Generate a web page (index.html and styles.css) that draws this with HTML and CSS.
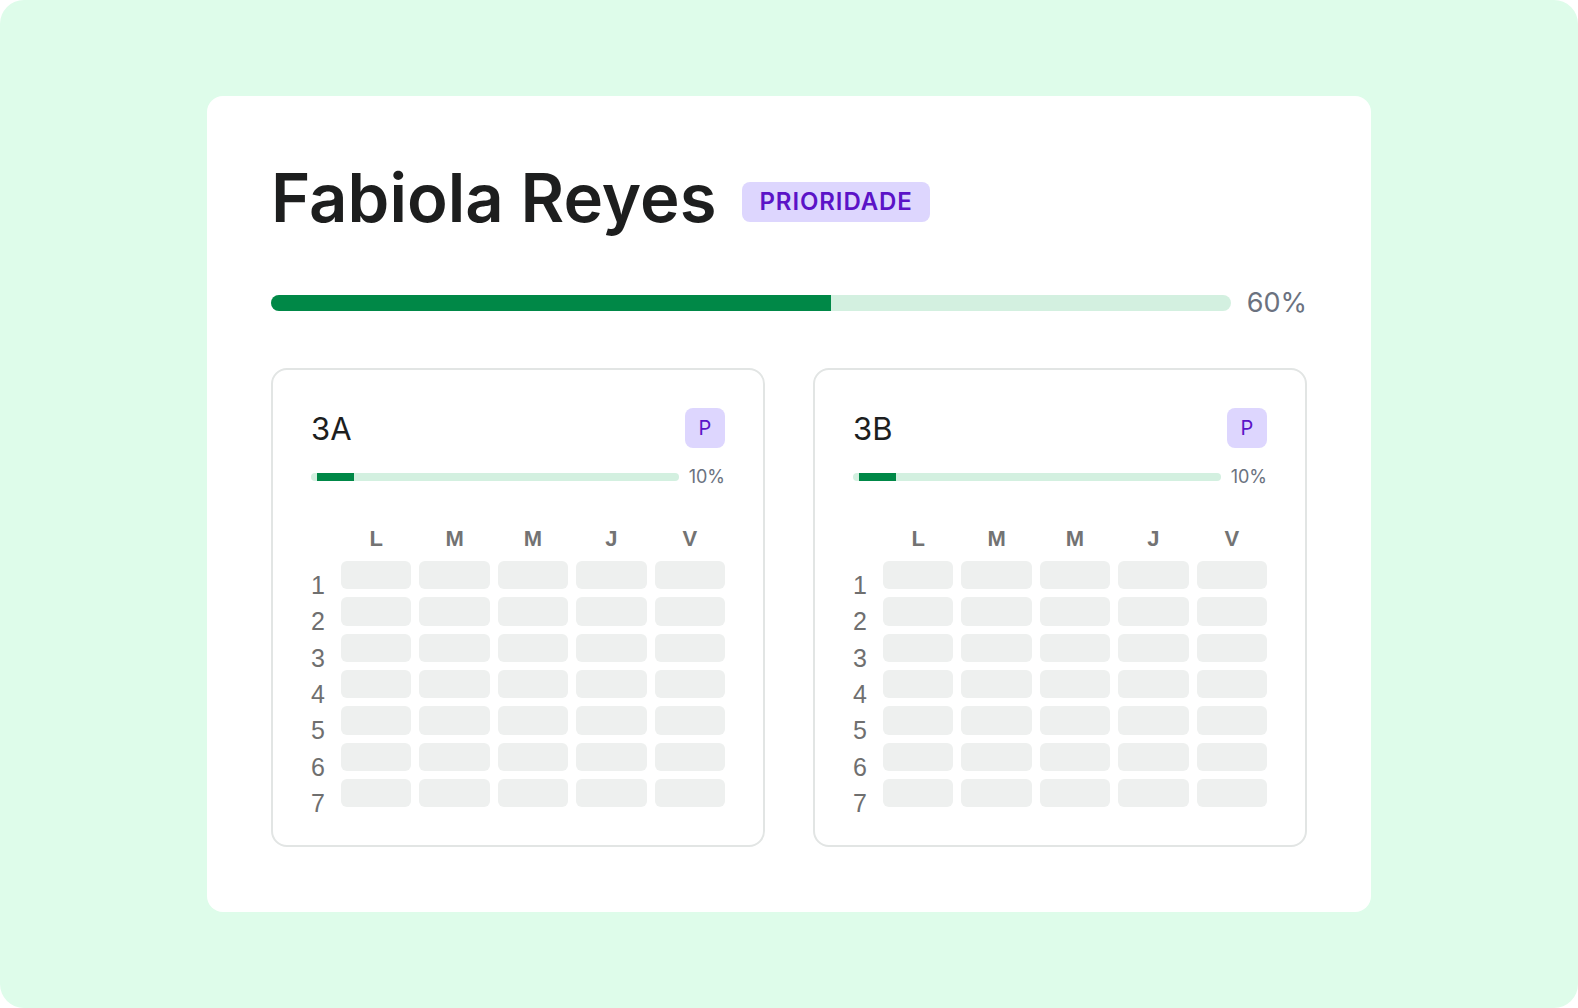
FILE: index.html
```html
<!DOCTYPE html>
<html lang="es">
<head>
    <meta charset="UTF-8">
    <meta name="viewport" content="width=device-width, initial-scale=1.0">
    <title>Fabiola Reyes</title>
    <link rel="stylesheet" href="styles.css">
</head>
<body>
    <div class="frame">
        <div class="card">
            <div class="header">
                <h1 class="name">Fabiola Reyes</h1>
                <span class="badge">PRIORIDADE</span>
            </div>

            <div class="progress">
                <div class="track"><div class="fill" style="width: 58.3%"></div></div>
                <span class="percent">60%</span>
            </div>

            <div class="groups">
                <div class="group">
                    <div class="group-head">
                        <span class="group-name">3A</span>
                        <span class="tag">P</span>
                    </div>
                    <div class="mini-progress">
                        <div class="mini-track"><div class="mini-fill" style="width: 10%"></div></div>
                        <span class="mini-percent">10%</span>
                    </div>
                    <div class="schedule">
                        <span></span>
                        <span class="day">L</span><span class="day">M</span><span class="day">M</span><span class="day">J</span><span class="day">V</span>
                        <span class="hour">1</span><span class="slot"></span><span class="slot"></span><span class="slot"></span><span class="slot"></span><span class="slot"></span>
                        <span class="hour">2</span><span class="slot"></span><span class="slot"></span><span class="slot"></span><span class="slot"></span><span class="slot"></span>
                        <span class="hour">3</span><span class="slot"></span><span class="slot"></span><span class="slot"></span><span class="slot"></span><span class="slot"></span>
                        <span class="hour">4</span><span class="slot"></span><span class="slot"></span><span class="slot"></span><span class="slot"></span><span class="slot"></span>
                        <span class="hour">5</span><span class="slot"></span><span class="slot"></span><span class="slot"></span><span class="slot"></span><span class="slot"></span>
                        <span class="hour">6</span><span class="slot"></span><span class="slot"></span><span class="slot"></span><span class="slot"></span><span class="slot"></span>
                        <span class="hour">7</span><span class="slot"></span><span class="slot"></span><span class="slot"></span><span class="slot"></span><span class="slot"></span>
                    </div>
                </div>

                <div class="group">
                    <div class="group-head">
                        <span class="group-name">3B</span>
                        <span class="tag">P</span>
                    </div>
                    <div class="mini-progress">
                        <div class="mini-track"><div class="mini-fill" style="width: 10%"></div></div>
                        <span class="mini-percent">10%</span>
                    </div>
                    <div class="schedule">
                        <span></span>
                        <span class="day">L</span><span class="day">M</span><span class="day">M</span><span class="day">J</span><span class="day">V</span>
                        <span class="hour">1</span><span class="slot"></span><span class="slot"></span><span class="slot"></span><span class="slot"></span><span class="slot"></span>
                        <span class="hour">2</span><span class="slot"></span><span class="slot"></span><span class="slot"></span><span class="slot"></span><span class="slot"></span>
                        <span class="hour">3</span><span class="slot"></span><span class="slot"></span><span class="slot"></span><span class="slot"></span><span class="slot"></span>
                        <span class="hour">4</span><span class="slot"></span><span class="slot"></span><span class="slot"></span><span class="slot"></span><span class="slot"></span>
                        <span class="hour">5</span><span class="slot"></span><span class="slot"></span><span class="slot"></span><span class="slot"></span><span class="slot"></span>
                        <span class="hour">6</span><span class="slot"></span><span class="slot"></span><span class="slot"></span><span class="slot"></span><span class="slot"></span>
                        <span class="hour">7</span><span class="slot"></span><span class="slot"></span><span class="slot"></span><span class="slot"></span><span class="slot"></span>
                    </div>
                </div>
            </div>
        </div>
    </div>
</body>
</html>
```

FILE: styles.css
```css
body {
    margin: 0;
    padding: 0;
    background-color: white;
    font-family: Inter, "Noto Sans", sans-serif;
}
.frame {
    width: 1578px;
    height: 1008px;
    box-sizing: border-box;
    background-color: #defcea;
    border-radius: 24px;
    display: flex;
    justify-content: center;
    align-items: center;
}
.card {
    width: 1164px;
    height: 816px;
    box-sizing: border-box;
    padding: 62px 64px 0;
    background-color: white;
    border-radius: 16px;
}
.header {
    display: flex;
    align-items: center;
    gap: 26px;
}
.name {
    margin: 0;
    font-size: 67px;
    line-height: 80px;
    font-weight: 600;
    color: #1d1e1e;
}
.badge {
    margin-top: 8px;
    height: 40px;
    line-height: 40px;
    padding: 0 17px;
    border-radius: 8px;
    background-color: #ddd6fe;
    color: #5b13c7;
    font-size: 24px;
    font-weight: 600;
    letter-spacing: 0.9px;
}
.progress {
    display: flex;
    align-items: center;
    gap: 16px;
    margin-top: 48px;
}
.track {
    flex: 1;
    height: 16px;
    border-radius: 8px;
    background-color: #d3f0e0;
    overflow: hidden;
}
.fill {
    height: 100%;
    background-color: #008847;
}
.percent {
    font-size: 27px;
    line-height: 34px;
    color: #6b7280;
}
.groups {
    display: grid;
    grid-template-columns: 1fr 1fr;
    gap: 48px;
    margin-top: 48px;
}
.group {
    border: 2px solid #e2e5e4;
    border-radius: 16px;
    padding: 38px;
}
.group-head {
    display: flex;
    justify-content: space-between;
    align-items: center;
}
.group-name {
    font-size: 31px;
    color: #1d1e1e;
}
.tag {
    width: 40px;
    height: 40px;
    line-height: 40px;
    text-align: center;
    border-radius: 8px;
    background-color: #ddd6fe;
    color: #5b13c7;
    font-size: 20px;
}
.mini-progress {
    display: flex;
    align-items: center;
    gap: 10px;
    margin-top: 19px;
}
.mini-track {
    flex: 1;
    height: 8px;
    border-radius: 4px;
    background-color: #d3f0e0;
}
.mini-fill {
    height: 100%;
    margin-left: 6px;
    background-color: #008847;
}
.mini-percent {
    font-size: 18px;
    line-height: 20px;
    color: #6b7280;
}
.schedule {
    display: grid;
    grid-template-columns: 22px repeat(5, 1fr);
    grid-template-rows: 28px repeat(7, 28.33px);
    gap: 8px;
    margin-top: 38px;
    font-family: "Liberation Sans", Arial, sans-serif;
}
.day {
    text-align: center;
    font-size: 22px;
    line-height: 28px;
    font-weight: bold;
    color: #737373;
}
.hour {
    align-self: start;
    font-size: 25px;
    line-height: 48px;
    color: #6f6f6f;
}
.slot {
    background-color: #eef0ef;
    border-radius: 6px;
}
```
